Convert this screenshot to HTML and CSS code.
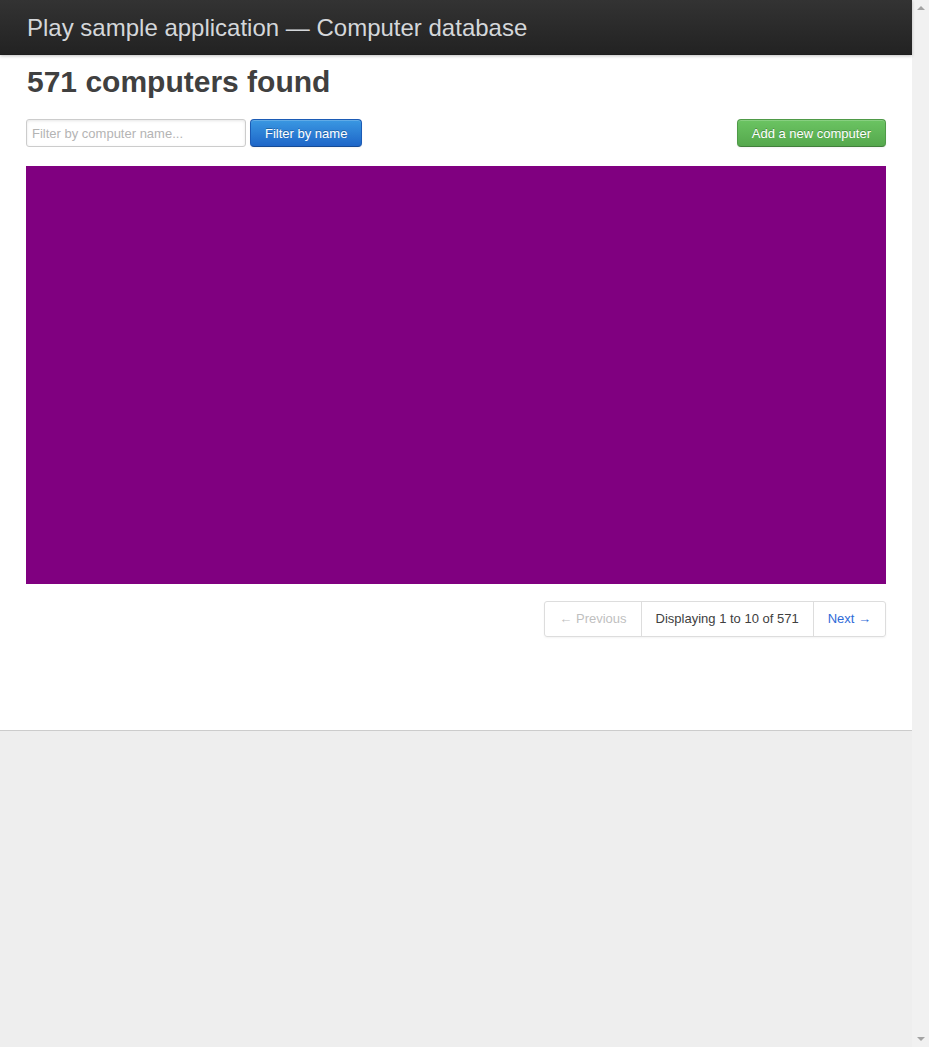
FILE: index.html
```html
<!DOCTYPE html>
<html lang="en">
<head>
<meta charset="utf-8">
<title>Computers database</title>
<link rel="stylesheet" href="styles.css">
</head>
<body>
<div class="viewport">
  <div class="page">
    <header class="topbar">
      <h1 class="brand">Play sample application — Computer database</h1>
    </header>
    <section class="main">
      <h1 class="count">571 computers found</h1>
      <div class="actions">
        <form class="filter">
          <input class="search" type="search" placeholder="Filter by computer name...">
          <button class="btn btn-primary" type="button">Filter by name</button>
        </form>
        <a class="btn btn-success" href="#">Add a new computer</a>
      </div>
      <div class="results"></div>
      <div class="pager-row">
        <ul class="pagination">
          <li class="prev disabled">← Previous</li>
          <li class="current">Displaying 1 to 10 of 571</li>
          <li class="next">Next →</li>
        </ul>
      </div>
    </section>
  </div>
  <div class="scrollbar">
    <span class="arrow up"></span>
    <span class="arrow down"></span>
  </div>
</div>
</body>
</html>
```
FILE: styles.css
```css
html, body {
  margin: 0;
  padding: 0;
  height: 100%;
  overflow: hidden;
}
body {
  font-family: "Liberation Sans", Arial, Helvetica, sans-serif;
  font-size: 13px;
  color: #404040;
  background: #eeeeee;
}
.viewport {
  display: flex;
  height: 100%;
}
.page {
  flex: 1;
  min-width: 0;
  display: flex;
  flex-direction: column;
}
.topbar {
  height: 55px;
  background: linear-gradient(#333333, #222222);
  box-shadow: 0 1px 3px rgba(0,0,0,0.25), 0 -1px 0 rgba(0,0,0,0.1) inset;
  padding: 0 27px;
  display: flex;
  align-items: center;
  position: relative;
  z-index: 1;
}
.brand {
  margin: 0;
  font-size: 24px;
  font-weight: normal;
  color: #d4d7da;
  line-height: 1;
}
.main {
  background: #ffffff;
  border-bottom: 1px solid #cccccc;
  padding: 9px 26px 93px;
}
.count {
  margin: 0;
  padding-left: 1px;
  font-size: 30px;
  line-height: 36px;
  font-weight: bold;
  color: #404040;
}
.actions {
  margin-top: 19px;
  display: flex;
  justify-content: space-between;
  align-items: center;
}
.filter {
  display: flex;
  gap: 4px;
  margin: 0;
}
.search {
  box-sizing: border-box;
  width: 220px;
  height: 28px;
  border: 1px solid #cccccc;
  border-radius: 3px;
  padding: 0 5px;
  font-family: inherit;
  font-size: 13px;
  color: #555;
  box-shadow: inset 0 1px 3px rgba(0,0,0,0.1);
  -webkit-appearance: none;
  appearance: none;
}
.search::placeholder {
  color: #b4b4b4;
}
.btn {
  box-sizing: border-box;
  display: inline-flex;
  align-items: center;
  height: 28px;
  padding: 0 14px;
  border-radius: 4px;
  font-family: inherit;
  font-size: 13px;
  color: #ffffff;
  text-decoration: none;
  text-shadow: 0 -1px 0 rgba(0,0,0,0.25);
  box-shadow: inset 0 1px 0 rgba(255,255,255,0.2), 0 1px 2px rgba(0,0,0,0.05);
  cursor: pointer;
}
.btn-primary {
  background: linear-gradient(#3a98e2, #1e66c8);
  border: 1px solid #1c5bb5;
  border-bottom-color: #154a95;
}
.btn-success {
  background: linear-gradient(#6bc462, #55a84d);
  border: 1px solid #4f9a48;
  border-bottom-color: #417f3b;
}
.results {
  margin-top: 19px;
  height: 418px;
  background: #800080;
}
.pager-row {
  margin-top: 17px;
  display: flex;
  justify-content: flex-end;
}
.pagination {
  list-style: none;
  margin: 0;
  padding: 0;
  display: flex;
  border: 1px solid #dddddd;
  border-radius: 3px;
  box-shadow: 0 1px 2px rgba(0,0,0,0.05);
}
.pagination li {
  line-height: 34px;
  padding: 0 14px;
  border-left: 1px solid #dddddd;
}
.pagination li:first-child {
  border-left: 0;
}
.pagination .disabled {
  color: #bfbfbf;
}
.pagination .current {
  color: #404040;
}
.pagination .next {
  color: #2f6bd8;
}
.scrollbar {
  width: 17px;
  flex: none;
  background: #f1f1f1;
  display: flex;
  flex-direction: column;
  justify-content: space-between;
  align-items: center;
  padding: 6px 0;
  box-sizing: border-box;
}
.arrow {
  width: 0;
  height: 0;
  border-left: 4px solid transparent;
  border-right: 4px solid transparent;
}
.arrow.up {
  border-bottom: 4px solid #a3a3a3;
}
.arrow.down {
  border-top: 4px solid #a3a3a3;
}
```
